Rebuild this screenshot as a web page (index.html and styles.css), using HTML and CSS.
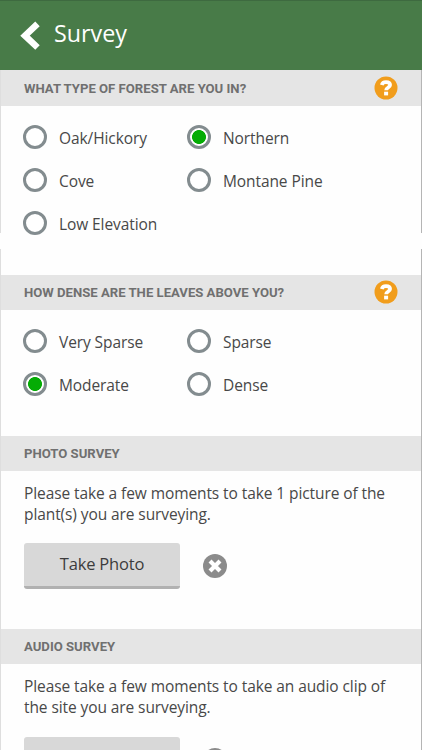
FILE: index.html
```html
<!DOCTYPE html>
<html lang="en">
<head>
<meta charset="utf-8">
<title>Survey</title>
<link rel="stylesheet" href="styles.css">
</head>
<body>
<svg class="defs" width="0" height="0" aria-hidden="true">
  <symbol id="help" viewBox="0 0 24 24">
    <circle cx="12" cy="12" r="11.5" fill="#f19d1c"/>
    <path d="M7.800 9C8.300 6.900 9.800 6.200 12 6.200c2.500 0 4.100 1 4.100 2.900 0 2.500-4 2.400-4 5.200" fill="none" stroke="#fff" stroke-width="3.700"/>
    <rect x="10.100" y="15.700" width="4" height="3.700" fill="#fff"/>
  </symbol>
  <symbol id="clear" viewBox="0 0 24 24">
    <circle cx="12" cy="12" r="12" fill="#8b8b8b"/>
    <path d="M8.500 8.500l7 7M15.500 8.500l-7 7" fill="none" stroke="#fff" stroke-width="4.200" stroke-linecap="square"/>
  </symbol>
</svg>
<div class="screen">
  <header class="topbar">
    <svg class="back" viewBox="0 0 20 30"><path d="M17.500 2.900L5 14.700l12.500 11.800" fill="none" stroke="#fff" stroke-width="6.500"/></svg>
    <h1>Survey</h1>
  </header>
  <section class="forest">
    <div class="heading"><h2>WHAT TYPE OF FOREST ARE YOU IN?</h2><svg class="help"><use href="#help"/></svg></div>
    <div class="options">
      <div class="option"><i class="radio"></i><span>Oak/Hickory</span></div>
      <div class="option"><i class="radio on"></i><span>Northern</span></div>
      <div class="option"><i class="radio"></i><span>Cove</span></div>
      <div class="option"><i class="radio"></i><span>Montane Pine</span></div>
      <div class="option"><i class="radio"></i><span>Low Elevation</span></div>
    </div>
  </section>
  <section class="leaves">
    <div class="heading"><h2>HOW DENSE ARE THE LEAVES ABOVE YOU?</h2><svg class="help"><use href="#help"/></svg></div>
    <div class="options">
      <div class="option"><i class="radio"></i><span>Very Sparse</span></div>
      <div class="option"><i class="radio"></i><span>Sparse</span></div>
      <div class="option"><i class="radio on"></i><span>Moderate</span></div>
      <div class="option"><i class="radio"></i><span>Dense</span></div>
    </div>
  </section>
  <section class="photo">
    <div class="heading"><h2>PHOTO SURVEY</h2></div>
    <p>Please take a few moments to take 1 picture of the<br>plant(s) you are surveying.</p>
    <div class="action"><div class="button">Take Photo</div><svg class="clear"><use href="#clear"/></svg></div>
  </section>
  <section class="audio">
    <div class="heading"><h2>AUDIO SURVEY</h2></div>
    <p>Please take a few moments to take an audio clip of<br>the site you are surveying.</p>
    <div class="action"><div class="button"></div><svg class="clear"><use href="#clear"/></svg></div>
  </section>
  <div class="edge left"></div>
  <div class="edge right"></div>
</div>
</body>
</html>
```
FILE: styles.css
```css
* { box-sizing: border-box; }
html, body { margin: 0; height: 750px; overflow: hidden; }
body { font-family: "Open Sans", "Noto Sans", sans-serif; color: #484848; background: #fefefe; }
.defs { position: absolute; }
h1, h2, p { margin: 0; }
.screen { position: relative; width: 422px; height: 750px; overflow: hidden; display: flex; flex-direction: column; }
.screen > section, .topbar { flex: none; }
.topbar { height: 70px; background: #487b48; border-top: 1px solid #3e6a40; display: flex; align-items: center; gap: 14px; padding: 0 20px; }
.topbar h1 { color: #fff; font-size: 23.300px; line-height: 32px; font-weight: 400; padding-bottom: 6px; }
.back { width: 20px; height: 30px; flex: none; }
.forest { height: 205px; }
.leaves { height: 161px; }
.photo { height: 193px; }
.audio { height: 193px; }
.heading { height: 35px; padding: 0 24px; background: #e5e5e5; display: flex; align-items: center; justify-content: space-between; }
.forest .heading { height: 36px; }
.heading h2 { font: 700 13.130px/18px Roboto, sans-serif; color: #707070; white-space: nowrap; }
.forest .heading h2 { padding-top: 1px; }
.help { width: 24px; height: 24px; flex: none; }
.leaves .help { margin-bottom: 1px; }
.options { display: grid; grid-template-columns: 164px 1fr; grid-auto-rows: 43px; padding: 9px 23px 0; }
.option { display: flex; align-items: center; gap: 12px; font-size: 15.500px; letter-spacing: -0.090px; line-height: 22px; white-space: nowrap; }
.option span { padding-top: 2px; }
.radio { width: 24px; height: 24px; flex: none; border: 3px solid #838c8f; border-radius: 50%; background: #fff; }
.radio.on { background: radial-gradient(circle, #05ac05 6.600px, #fff 7.300px); }
p { padding: 12px 24px 0; font-size: 15.500px; letter-spacing: -0.090px; line-height: 20.500px; white-space: nowrap; }
.action { display: flex; align-items: center; gap: 23px; padding: 19px 24px 0; }
.audio .action { padding-top: 20px; }
.button { width: 156px; height: 46px; border-radius: 3px; border-bottom: 3px solid #b1b1b1; background: #d8d8d8; font-size: 16.500px; letter-spacing: -0.200px; line-height: 42px; text-align: center; color: #3c3c3c; }
.clear { width: 24px; height: 24px; flex: none; }
.edge { position: absolute; top: 70px; width: 1px; height: 680px; }
.left { left: 0; background: linear-gradient(#dedede 0 163px, #fefefe 163px 179px, #dedede 179px); }
.right { right: 0; background: linear-gradient(#b5b5b5 0 163px, #fefefe 163px 179px, #b5b5b5 179px); }
```
